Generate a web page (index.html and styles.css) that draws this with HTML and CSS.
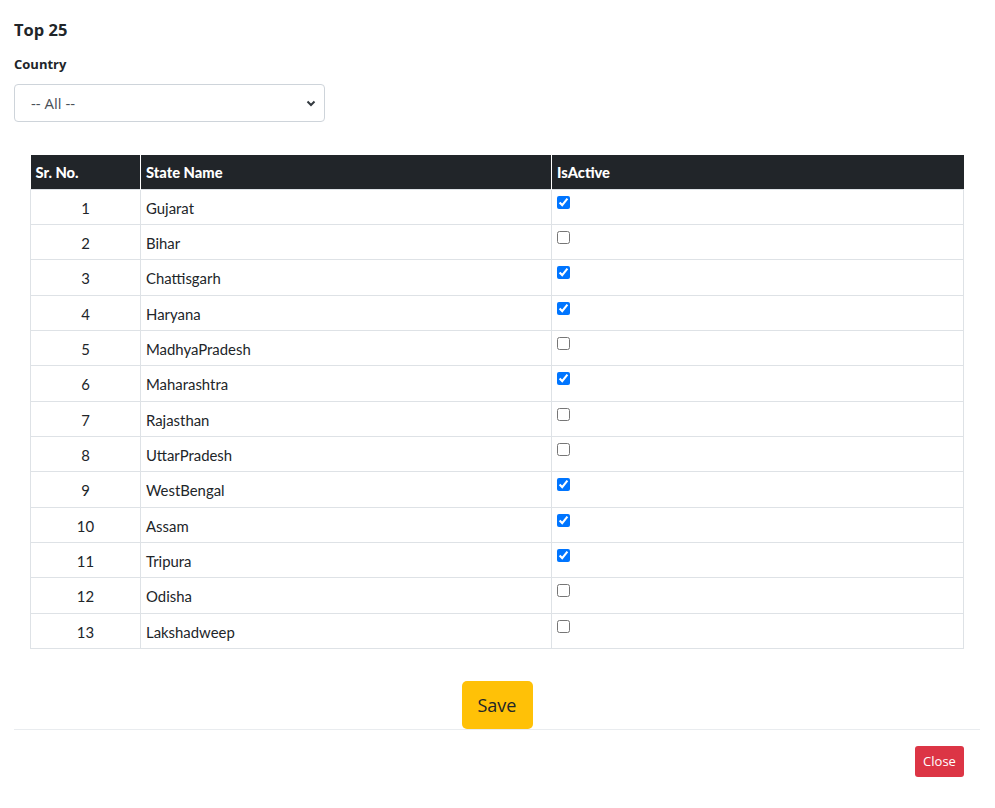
FILE: index.html
```html
<!DOCTYPE html>
<html>
<head>
<meta charset="utf-8">
<link rel="stylesheet" href="styles.css">
</head>
<body>
<div class="page">
  <h5 class="title">Top 25</h5>
  <label class="label">Country</label>
  <div class="select">
    <span>-- All --</span>
    <svg class="chev" width="10" height="8" viewBox="0 0 10 8"><path d="M1.5 2.5 L5 6 L8.5 2.5" fill="none" stroke="#343a40" stroke-width="2"/></svg>
  </div>
  <div class="table-wrap">
    <table class="grid">
      <thead>
        <tr><th class="c1">Sr. No.</th><th class="c2">State Name</th><th class="c3">IsActive</th></tr>
      </thead>
      <tbody>
        <tr><td class="num">1</td><td>Gujarat</td><td class="chk"><input type="checkbox" checked></td></tr>
        <tr><td class="num">2</td><td>Bihar</td><td class="chk"><input type="checkbox"></td></tr>
        <tr><td class="num">3</td><td>Chattisgarh</td><td class="chk"><input type="checkbox" checked></td></tr>
        <tr><td class="num">4</td><td>Haryana</td><td class="chk"><input type="checkbox" checked></td></tr>
        <tr><td class="num">5</td><td>MadhyaPradesh</td><td class="chk"><input type="checkbox"></td></tr>
        <tr><td class="num">6</td><td>Maharashtra</td><td class="chk"><input type="checkbox" checked></td></tr>
        <tr><td class="num">7</td><td>Rajasthan</td><td class="chk"><input type="checkbox"></td></tr>
        <tr><td class="num">8</td><td>UttarPradesh</td><td class="chk"><input type="checkbox"></td></tr>
        <tr><td class="num">9</td><td>WestBengal</td><td class="chk"><input type="checkbox" checked></td></tr>
        <tr><td class="num">10</td><td>Assam</td><td class="chk"><input type="checkbox" checked></td></tr>
        <tr><td class="num">11</td><td>Tripura</td><td class="chk"><input type="checkbox" checked></td></tr>
        <tr><td class="num">12</td><td>Odisha</td><td class="chk"><input type="checkbox"></td></tr>
        <tr><td class="num">13</td><td>Lakshadweep</td><td class="chk"><input type="checkbox"></td></tr>
      </tbody>
    </table>
  </div>
  <div class="save-row"><button class="btn-save">Save</button></div>
  <div class="footer"><button class="btn-close">Close</button></div>
</div>
</body>
</html>
```
FILE: styles.css
```css
html, body { margin: 0; padding: 0; background: #fff; }
body { font-family: "Open Sans", "Noto Sans", sans-serif; color: #212529; }
.page { padding: 0 15px 0 14px; }
.title { margin: 0; padding-top: 18px; font-size: 16.5px; font-weight: 700; line-height: 24px; }
.label { display: block; margin-top: 13px; font-size: 13px; font-weight: 700; line-height: 18px; }
.select {
  margin-top: 11px; width: 311px; height: 38px; box-sizing: border-box;
  border: 1px solid #ced4da; border-radius: 4px;
  display: flex; align-items: center; justify-content: space-between;
  padding: 0 8px 0 16px; font-size: 15px; color: #495057;
}
.chev { display: block; }
.table-wrap { padding: 33px 16px 0 16px; }
.grid { width: 934px; border-collapse: collapse; font-family: Lato, "Open Sans", sans-serif; font-size: 14.9px; }
.grid th {
  background: #212529; color: #fff; font-weight: 900; font-size: 14.7px; text-align: left;
  height: 34px; padding: 0 5px; box-sizing: border-box; border-left: 1px solid #fff;
}
.grid th:first-child { border-left: none; }
.c1 { width: 110px; }
.c2 { width: 411px; }
.grid td {
  border: 1px solid #dee2e6; padding: 9px 5px 7px; line-height: 18.35px; color: #212529;
}
.grid td.num { text-align: center; }
.grid td.chk { vertical-align: top; padding-top: 6px; }
.grid td.chk input { margin: 0; width: 13px; height: 13px; display: block; }
.save-row { display: flex; justify-content: center; padding-top: 32px; }
.btn-save {
  background: #ffc107; border: none; border-radius: 5px; color: #212529;
  font-family: "Open Sans", sans-serif; font-size: 18px; width: 71px; height: 48px; padding: 0;
}
.footer {
  border-top: 1px solid #e9ecef; display: flex; justify-content: flex-end;
  padding: 16px 16px 0 0;
}
.btn-close {
  background: #dc3545; color: #fff; border: none; border-radius: 3px;
  font-family: "Open Sans", sans-serif; font-size: 13px; width: 49px; height: 31px; padding: 0;
}
```
